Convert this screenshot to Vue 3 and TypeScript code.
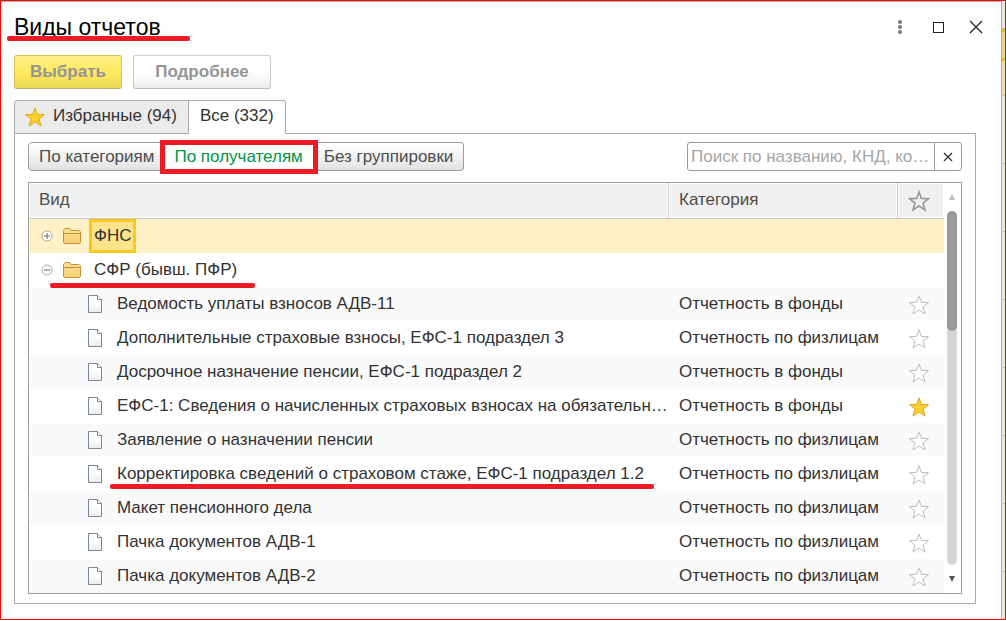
<script setup lang="ts">
import { ref } from 'vue'

interface ReportRow {
  title: string
  category: string
  favorite: boolean
  marked?: boolean
}

const starPath = 'M10 1 L12.4 7.4 L19.5 7.7 L14 12 L16 19 L10 15 L4 19 L6 12 L0.5 7.7 L7.6 7.4 Z'

const search = ref('')
const activeTab = ref('all')
const grouping = ref('recipient')
const groupings = [
  { id: 'category', label: 'По категориям' },
  { id: 'recipient', label: 'По получателям' },
  { id: 'none', label: 'Без группировки' },
]

const funds = 'Отчетность в фонды'
const persons = 'Отчетность по физлицам'
const rows = ref<ReportRow[]>([
  { title: 'Ведомость уплаты взносов АДВ-11', category: funds, favorite: false },
  { title: 'Дополнительные страховые взносы, ЕФС-1 подраздел 3', category: persons, favorite: false },
  { title: 'Досрочное назначение пенсии, ЕФС-1 подраздел 2', category: funds, favorite: false },
  { title: 'ЕФС-1: Сведения о начисленных страховых взносах на обязательн…', category: funds, favorite: true },
  { title: 'Заявление о назначении пенсии', category: persons, favorite: false },
  { title: 'Корректировка сведений о страховом стаже, ЕФС-1 подраздел 1.2', category: persons, favorite: false, marked: true },
  { title: 'Макет пенсионного дела', category: persons, favorite: false },
  { title: 'Пачка документов АДВ-1', category: persons, favorite: false },
  { title: 'Пачка документов АДВ-2', category: persons, favorite: false },
])
const groups = [
  { title: 'ФНС', open: false },
  { title: 'СФР (бывш. ПФР)', open: true },
]
</script>

<template>
  <div class="screen">
    <main class="dialog">
      <header class="titlebar">
        <h1 class="marked title">Виды отчетов</h1>
        <div class="window-buttons">
          <button type="button" aria-label="Меню">
            <svg width="16" height="16" viewBox="0 0 16 16" fill="#777"><circle cx="8" cy="3" r="2" /><circle cx="8" cy="8" r="2" /><circle cx="8" cy="13" r="2" /></svg>
          </button>
          <button type="button" aria-label="Развернуть">
            <svg width="16" height="16" viewBox="0 0 16 16" fill="none" stroke="#222"><rect x="3.5" y="3.5" width="10" height="10" /></svg>
          </button>
          <button type="button" aria-label="Закрыть">
            <svg width="16" height="16" viewBox="0 0 16 16" fill="none" stroke="#222" stroke-width="1.3"><path d="M2 2 L14 14 M14 2 L2 14" /></svg>
          </button>
        </div>
      </header>

      <div class="commands">
        <button type="button" class="command primary">Выбрать</button>
        <button type="button" class="command">Подробнее</button>
      </div>

      <div class="tabs" role="tablist">
        <button type="button" role="tab" class="tab" :class="{ active: activeTab === 'favorites' }" :aria-selected="activeTab === 'favorites'" @click="activeTab = 'favorites'">
          <svg width="20" height="20" viewBox="0 0 20 20"><path :d="starPath" fill="#fccf2e" stroke="#dca91c" /></svg>
          <span>Избранные (94)</span>
        </button>
        <button type="button" role="tab" class="tab" :class="{ active: activeTab === 'all' }" :aria-selected="activeTab === 'all'" @click="activeTab = 'all'"><span>Все (332)</span></button>
      </div>

      <section class="panel">
        <div class="filters">
          <div class="segments">
            <button v-for="g in groupings" :key="g.id" type="button" class="segment" :class="{ chosen: grouping === g.id }" @click="grouping = g.id">{{ g.label }}</button>
          </div>
          <div class="search">
            <input v-model="search" type="text" aria-label="Поиск" placeholder="Поиск по названию, КНД, ко…" />
            <button type="button" aria-label="Очистить" @click="search = ''">
              <svg width="12" height="12" viewBox="0 0 12 12" fill="none" stroke="#333" stroke-width="1.3"><path d="M2 2 L10 10 M10 2 L2 10" /></svg>
            </button>
          </div>
        </div>

        <div class="list">
          <table>
            <colgroup><col /><col class="col-category" /><col class="col-star" /></colgroup>
            <thead>
              <tr>
                <th>Вид</th>
                <th>Категория</th>
                <th class="star-cell">
                  <svg width="22" height="22" viewBox="-1 -1 22 22" role="img" aria-label="Избранное"><path :d="starPath" fill="none" stroke="#999" stroke-width="1.6" /></svg>
                </th>
              </tr>
            </thead>
            <tbody>
              <tr v-for="(g, i) in groups" :key="g.title" :class="{ selected: i === 0 }">
                <td colspan="3">
                  <div class="group">
                    <button type="button" class="expander" :aria-label="g.open ? 'Свернуть' : 'Развернуть'">
                      <svg width="12" height="12" viewBox="0 0 12 12" fill="#fff" :stroke="g.open ? '#aaa' : '#b5a888'">
                        <circle cx="6" cy="6" r="5" />
                        <path d="M3 6 H9" stroke="#666" />
                        <path v-if="!g.open" d="M6 3 V9" stroke="#666" />
                      </svg>
                    </button>
                    <svg class="folder" width="20" height="18" viewBox="0 0 20 18">
                      <defs><linearGradient :id="`folder-${i}`" x2="0" y2="1"><stop offset="0" stop-color="#fde596" /><stop offset="1" stop-color="#f5d06e" /></linearGradient></defs>
                      <path d="M1.5 15.5 V3.5 L3 1.5 H7.5 L9 3.5 H17 L18.5 5 V15.5 L17.5 16.5 H2.5 Z" :fill="`url(#folder-${i})`" stroke="#c98e3c" />
                      <path d="M2 6.5 H18" stroke="#c98e3c" />
                    </svg>
                    <span class="group-name" :class="{ current: i === 0 }">{{ g.title }}</span>
                    <span v-if="g.open" class="group-mark"></span>
                  </div>
                </td>
              </tr>
              <tr v-for="row in rows" :key="row.title" class="report">
                <td class="name-cell">
                  <div class="name">
                    <svg width="16" height="20" viewBox="0 0 16 20">
                      <defs><linearGradient id="sheet" x2="0" y2="1"><stop offset="0.4" stop-color="#fff" /><stop offset="1" stop-color="#ececec" /></linearGradient></defs>
                      <path d="M1.5 1.5 H10.5 L14.5 5.5 V18.5 H1.5 Z" fill="url(#sheet)" stroke="#76879a" />
                      <path d="M10.5 1.5 V5.5 H14.5" fill="#fff" stroke="#76879a" />
                    </svg>
                    <span class="name-text" :class="{ marked: row.marked }">{{ row.title }}</span>
                  </div>
                </td>
                <td>{{ row.category }}</td>
                <td class="star-cell">
                  <button type="button" class="star" :aria-label="`Избранное: ${row.title}`" :aria-pressed="row.favorite" @click="row.favorite = !row.favorite">
                    <svg width="20" height="20" viewBox="0 0 20 20"><path :d="starPath" :fill="row.favorite ? '#fccf2e' : '#fff'" :stroke="row.favorite ? '#dca91c' : '#bdbdbd'" /></svg>
                  </button>
                </td>
              </tr>
            </tbody>
          </table>
          <div class="scrollbar">
            <svg width="6" height="6" viewBox="0 0 6 6"><path d="M3 0 L6 6 H0 Z" fill="#bbb" /></svg>
            <div class="track"><div class="thumb"></div></div>
            <svg width="6" height="6" viewBox="0 0 6 6"><path d="M3 6 L6 0 H0 Z" fill="#555" /></svg>
          </div>
        </div>
      </section>
    </main>
    <aside class="backdrop"><i class="shade"></i><i class="gold"></i><i class="rest"></i></aside>
  </div>
</template>

<style>
body {
  margin: 0;
  background: #fff;
}
</style>

<style scoped>
* {
  box-sizing: border-box;
}
.screen {
  display: flex;
  min-height: 100vh;
  border: 1px solid #f00;
  font-family: "Liberation Sans", Arial, sans-serif;
  font-size: 17px;
  color: #333;
}
button {
  font: inherit;
  color: inherit;
  margin: 0;
  padding: 0;
  border: 0;
  background: none;
}
svg {
  display: block;
  flex: none;
}
.dialog {
  flex: 1;
  min-width: 0;
  display: flex;
  flex-direction: column;
  padding: 0 25px 15px 13px;
  border-top: 1px solid #aaa;
  border-right: 1px solid #aaa;
}
.titlebar {
  display: flex;
  justify-content: space-between;
  align-items: center;
  height: 53px;
  padding-bottom: 4px;
  flex: none;
}
.title {
  margin: 0;
  font-size: 23px;
  line-height: 28px;
  font-weight: 400;
  color: #000;
}
.marked {
  position: relative;
}
.marked::after {
  content: "";
  position: absolute;
  left: -7px;
  right: -10px;
  bottom: -5px;
  height: 5px;
  border-radius: 2px;
  background: #ed1c24;
}
.title.marked::after {
  right: -29px;
  bottom: 0;
}
.window-buttons {
  display: flex;
  gap: 22px;
  margin-right: -8px;
}
.commands {
  display: flex;
  gap: 11px;
}
.command {
  min-width: 138px;
  height: 34px;
  border: 1px solid #ccc;
  border-bottom-color: #b8b8b8;
  border-radius: 3px;
  background: linear-gradient(#fff 50%, #ececec);
  color: #959595;
  font-weight: 700;
}
.primary {
  min-width: 108px;
  border-color: #d5c35c;
  border-bottom-color: #bcb07a;
  background: linear-gradient(#fff08a, #ffe95f 50%, #ecd956);
}
.tabs {
  display: flex;
  margin-top: 11px;
  height: 34px;
  position: relative;
}
.tab {
  display: flex;
  align-items: center;
  gap: 8px;
  padding: 0 11px;
  height: 34px;
  border: 1px solid #aaa;
  background: #ebebeb;
}
.tab span {
  padding-bottom: 2px;
}
.tab:first-child {
  padding-left: 10px;
  border-radius: 3px 0 0 0;
}
.tab:last-child {
  border-left: 0;
  border-radius: 0 3px 0 0;
}
.tab.active {
  background: #fff;
  border-bottom-color: #fff;
}
.panel {
  flex: 1;
  margin-top: -1px;
  padding: 8px 13px 9px;
  border: 1px solid #aaa;
}
.filters {
  display: flex;
  justify-content: space-between;
  margin-bottom: 11px;
}
.segments {
  display: flex;
}
.segment {
  height: 29px;
  padding: 0 10px;
  border: 1px solid #9c9c9c;
  border-left-width: 0;
  background: linear-gradient(#fff 10%, #e2e2e2);
  color: #4d4d4d;
}
.segment:first-child {
  padding: 0 9px 0 10px;
  border-left-width: 1px;
  border-radius: 4px 0 0 4px;
}
.segment:last-child {
  border-radius: 0 4px 4px 0;
}
.segment.chosen {
  position: relative;
  background: #fff;
  color: #009646;
}
.segment.chosen::after {
  content: "";
  position: absolute;
  inset: -3px -5px -4px -4px;
  border: 5px solid #ed1c24;
}
.search {
  display: flex;
  width: 275px;
  height: 29px;
  border: 1px solid #9c9c9c;
  border-radius: 3px;
}
.search input {
  flex: 1;
  min-width: 0;
  padding: 0 0 0 3px;
  border: 0;
  outline: 0;
  background: none;
  font: inherit;
  text-overflow: ellipsis;
}
.search input::placeholder {
  color: #a6a6a6;
}
.search button {
  display: flex;
  align-items: center;
  justify-content: center;
  width: 27px;
  border-left: 1px solid #9c9c9c;
}
.list {
  display: flex;
  border: 1px solid #9c9c9c;
}
table {
  flex: 1;
  min-width: 0;
  width: 100%;
  table-layout: fixed;
  border-collapse: separate;
  border-spacing: 0;
}
.col-category {
  width: 229px;
}
.col-star {
  width: 46px;
}
th {
  height: 36px;
  padding: 0 10px 2px;
  border-bottom: 1px solid #c4c4c4;
  border-right: 1px solid #c8c8c8;
  background: #f0f0f0;
  box-shadow: inset 0 0 0 1px #fff;
  font-weight: 400;
  text-align: left;
  color: #4d4d4d;
}
th:last-child {
  border-right: 0;
}
td {
  height: 34px;
  padding: 0 10px;
  white-space: nowrap;
}
.report:nth-child(odd) {
  background: #fafafa;
}
.selected {
  background: #fdf1c5;
}
td.name-cell {
  padding-right: 0;
}
th.star-cell,
td.star-cell {
  padding: 1px 5px 0 0;
}
.star-cell svg {
  margin: 0 auto;
}
.star {
  display: block;
  margin: 0 auto;
}
.group {
  position: relative;
  display: flex;
  align-items: center;
  height: 34px;
  padding-left: 2px;
}
.folder {
  margin: 0 7px 0 9px;
}
.group-name {
  height: 34px;
  line-height: 28px;
  padding: 0 2px;
  border: 3px solid transparent;
}
.current {
  border-color: #fcc920;
  background: #ffe48c;
}
.group-mark {
  position: absolute;
  left: 11px;
  bottom: -1px;
  width: 205px;
  height: 5px;
  border-radius: 2px;
  background: #ed1c24;
}
.name {
  display: flex;
  align-items: center;
  gap: 14px;
  padding-left: 48px;
}
.name-text {
  line-height: 20px;
}
.scrollbar {
  display: flex;
  flex-direction: column;
  align-items: center;
  justify-content: space-between;
  width: 17px;
  padding: 11px 1px 11px 0;
}
.track {
  flex: 1;
  width: 10px;
  margin: 11px 0;
  border-radius: 5px;
  background: #d6d6d6;
}
.thumb {
  height: 34%;
  border-radius: 5px;
  background: #999;
}
.backdrop {
  display: flex;
  flex-direction: column;
  width: 3px;
  background: #e8e8e8;
}
.shade {
  height: 28px;
  border-bottom: 1px solid #bbb;
}
.gold {
  height: 66px;
  background: linear-gradient(#e8bd20 3px, #e8d888 3px 29px, #e8bd20 29px 32px, #ebe1b8 32px);
}
.rest {
  flex: 1;
  background: repeating-linear-gradient(#c8c8c8 0 1px, #e8e8e8 1px 68px);
}
</style>
